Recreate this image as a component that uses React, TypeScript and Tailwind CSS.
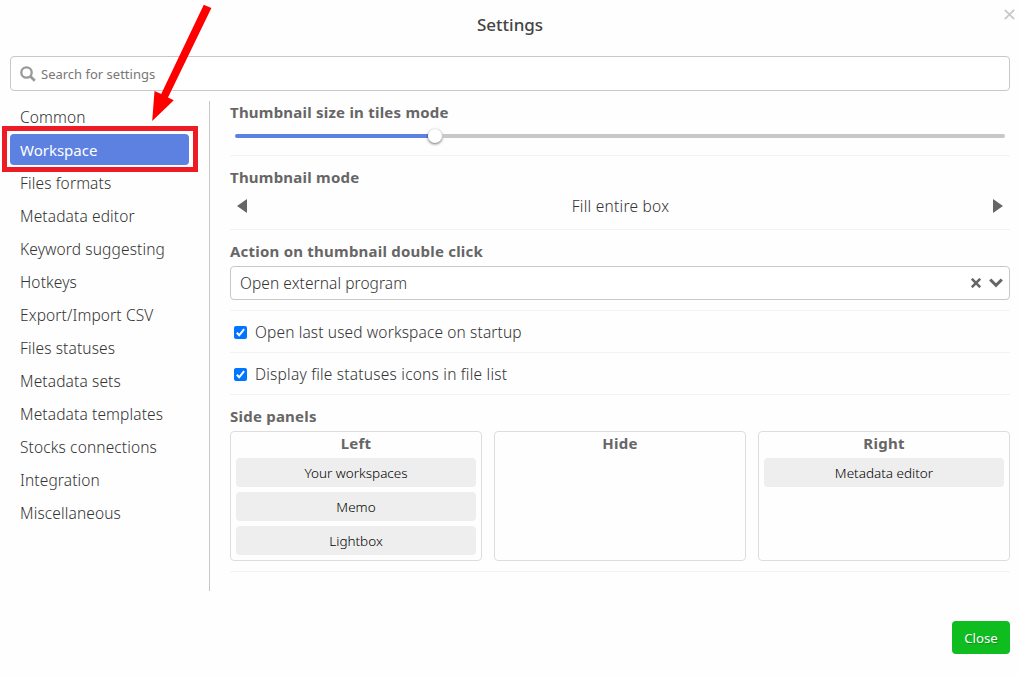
import type { ReactNode } from "react";

const categories = [
  "Common",
  "Workspace",
  "Files formats",
  "Metadata editor",
  "Keyword suggesting",
  "Hotkeys",
  "Export/Import CSV",
  "Files statuses",
  "Metadata sets",
  "Metadata templates",
  "Stocks connections",
  "Integration",
  "Miscellaneous",
];

const panels = [
  { title: "Left", items: ["Your workspaces", "Memo", "Lightbox"] },
  { title: "Hide", items: [] },
  { title: "Right", items: ["Metadata editor"] },
];

function Heading({ children }: { children: ReactNode }) {
  return <h2 className="pb-[2px] text-[15px] leading-5 font-bold tracking-[0.22px] text-[#666]">{children}</h2>;
}

function CheckRow({ label, spacing }: { label: string; spacing: string }) {
  return (
    <label className="flex h-[42px] items-center border-b border-[#f3f3f3] pl-1 pt-[3px] text-[15.5px] font-light text-[#333]">
      <svg width="13" height="13" viewBox="0 0 13 13" className="mb-[1px]">
        <rect width="13" height="13" rx="2" fill="#0075ff" />
        <path d="M2.8 6.8 5.2 9.3 10.1 3.2" fill="none" stroke="#fff" strokeWidth="2" />
      </svg>
      <span className={"mb-[2px] ml-2 leading-[22px] " + spacing}>{label}</span>
    </label>
  );
}

export default function App() {
  return (
    <div className="relative flex h-[676px] w-[1019px] flex-col overflow-hidden bg-[#fefefe] px-[10px] pr-[9px] font-['Noto_Sans',sans-serif] text-[#333]">
      <header className="flex h-14 shrink-0 items-start justify-center pt-[13px]">
        <h1 className="text-[17px] leading-6 font-medium text-[#444]">Settings</h1>
      </header>
      <button aria-label="Close" className="absolute right-1 top-[9px]">
        <svg width="11" height="11" viewBox="0 0 11 11" stroke="#c8c8c8" strokeWidth="1.8">
          <path d="M.8.8 10.2 10.2M10.2.8.8 10.2" />
        </svg>
      </button>

      <div className="flex h-[35px] shrink-0 items-center rounded-[4px] border border-[#c8c8c8] bg-white pl-[9px]">
        <svg width="16" height="16" viewBox="0 0 16 16" fill="none" stroke="#999">
          <circle cx="6.5" cy="6.5" r="5.2" strokeWidth="2.3" />
          <path d="m10.5 10.5 4.3 4.3" strokeWidth="2.7" />
        </svg>
        <span className="ml-[5px] text-[13px] leading-5 text-[#777]">Search for settings</span>
      </div>

      <main className="mt-[10px] flex h-[490px] shrink-0">
        <nav className="flex w-[200px] shrink-0 flex-col gap-[2px] border-r border-[#c8c8c8] pr-5">
          {categories.map((name) => (
            <div
              key={name}
              className={
                name === "Workspace"
                  ? "h-[31px] rounded-[4px] bg-[#5c81e1] pl-[10px] text-[15px] leading-[33px] font-normal text-white"
                  : "h-[31px] pl-[10px] text-[15.5px] leading-[33px] font-light tracking-[0.13px] text-[#333]"
              }
            >
              {name}
            </div>
          ))}
        </nav>

        <div className="ml-5 flex w-[780px] flex-col">
          <section className="h-[55px] border-b border-[#f3f3f3] pt-[1px]">
            <Heading>Thumbnail size in tiles mode</Heading>
            <div className="mx-[5px] mt-[4px] flex h-4 items-center">
              <div className="h-1 w-[193px] rounded-l-full bg-[#5c81e1]" />
              <div className="h-[14px] w-[14px] rounded-full bg-white shadow-[0_1px_3px_rgba(0,0,0,0.6)]" />
              <div className="h-1 flex-1 rounded-r-full bg-[#c8c8c8]" />
            </div>
          </section>

          <section className="h-[74px] border-b border-[#f3f3f3] pt-[11px]">
            <Heading>Thumbnail mode</Heading>
            <div className="flex h-[34px] items-center justify-between px-[7px]">
              <svg width="10" height="14" viewBox="0 0 10 14" fill="#666"><path d="M0 7 10 0v14z" /></svg>
              <span className="pl-[1px] text-[15.5px] leading-[22px] font-light tracking-[0.25px]">Fill entire box</span>
              <svg width="10" height="14" viewBox="0 0 10 14" fill="#666"><path d="M10 7 0 0v14z" /></svg>
            </div>
          </section>

          <section className="h-[81px] border-b border-[#f3f3f3] pt-[11px]">
            <Heading>Action on thumbnail double click</Heading>
            <div className="mt-[3px] flex h-[34px] items-center rounded-[4px] border border-[#c8c8c8] bg-white pl-[9px] pr-[6px]">
              <span className="flex-1 text-[15.5px] leading-[22px] font-light tracking-[0.07px]">Open external program</span>
              <svg width="10" height="10" viewBox="0 0 10 10" stroke="#666" strokeWidth="2.6">
                <path d="M.8.8 9.2 9.2M9.2.8.8 9.2" />
              </svg>
              <svg width="14" height="10" viewBox="0 0 14 10" fill="none" stroke="#666" strokeWidth="3" className="ml-2">
                <path d="m1.2 1.5 5.8 5.8 5.8-5.8" />
              </svg>
            </div>
          </section>

          <CheckRow label="Open last used workspace on startup" spacing="tracking-[0.13px]" />
          <CheckRow label="Display file statuses icons in file list" spacing="tracking-[0.22px]" />

          <section className="h-[177px] border-b border-[#f3f3f3] pt-[11px]">
            <Heading>Side panels</Heading>
            <div className="mt-[3px] flex gap-3">
              {panels.map((p) => (
                <div key={p.title} className="h-[130px] flex-1 rounded-[4px] border border-[#ddd] px-[5px] text-center">
                  <h3 className="h-[26px] text-[15px] leading-[22px] font-bold tracking-[0.25px] text-[#666]">{p.title}</h3>
                  <div className="flex flex-col gap-[5px]">
                    {p.items.map((item) => (
                      <div key={item} className="h-[29px] rounded-[4px] bg-[#eee] text-[13.5px] leading-[30px] font-light text-black">
                        {item}
                      </div>
                    ))}
                  </div>
                </div>
              ))}
            </div>
          </section>
        </div>
      </main>

      <footer className="mt-[30px] flex justify-end">
        <button className="h-[33px] w-[58px] rounded-[4px] bg-[#0fbd20] pt-[1px] text-[13.3px] leading-[32px] text-white [text-shadow:1px_1px_1px_rgba(0,0,0,0.25)]">Close</button>
      </footer>

      <div className="pointer-events-none absolute left-[2px] top-[126px] h-[46px] w-[196px] border-[5px] border-[#ed1c24]" />
      <svg className="pointer-events-none absolute left-[148px] top-0" width="70" height="126" viewBox="148 0 70 126">
        <path d="M203.8 4.8 211.4 8 168 97.5 173.8 100.3 152.2 121 154.5 91 161.2 94z" fill="#f00" />
      </svg>
    </div>
  );
}
